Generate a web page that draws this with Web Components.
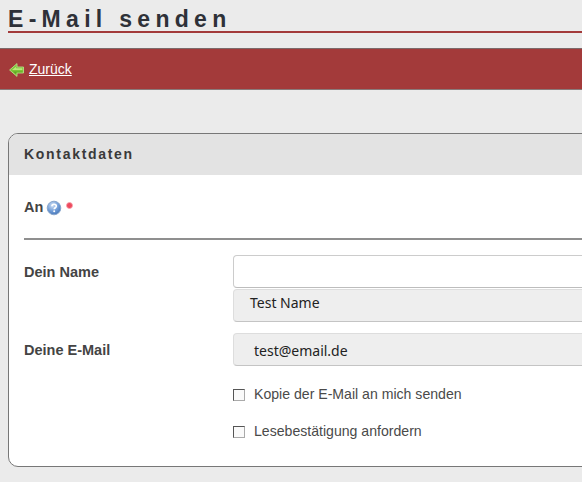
<!DOCTYPE html>
<html lang="de"><head><meta charset="utf-8"><title>E-Mail senden</title>
<style>
html,body{margin:0;padding:0;height:482px;overflow:hidden;background:#ebebeb;font-family:"Liberation Sans",Arial,sans-serif;color:#444}
</style></head><body>
<page-title>E-Mail senden</page-title>
<nav-bar><a-back>Zurück</a-back></nav-bar>
<form-card heading="Kontaktdaten">
  <form-row label="An" help required></form-row>
  <form-sep></form-sep>
  <form-row label="Dein Name" class="name">
    <text-box></text-box>
    <text-box filled>Test Name</text-box>
  </form-row>
  <form-row label="Deine E-Mail" class="mail">
    <text-box filled indent>test@email.de</text-box>
    <check-line>Kopie der E-Mail an mich senden</check-line>
    <check-line class="last">Lesebestätigung anfordern</check-line>
  </form-row>
</form-card>
<script>
function def(name, html, setup){
  customElements.define(name, class extends HTMLElement{
    constructor(){super();this.attachShadow({mode:'open'}).innerHTML=html;}
    connectedCallback(){setup&&setup(this)}
  });
}
def('page-title',`<style>:host{display:block;margin:8px 0 0 8px}
h1{margin:0;font:bold 23px/23px "Liberation Sans",Arial,sans-serif;letter-spacing:5.3px;color:#2e3138;border-bottom:2px solid #a33a3a;height:23px;padding-bottom:0;white-space:nowrap}</style><h1><slot></slot></h1>`);
def('nav-bar',`<style>:host{display:flex;align-items:center;height:40px;margin-top:15px;background:#a33a3a;border-top:1px solid #7d6a6a;border-bottom:1px solid #8a7a7a;padding-left:9px}</style><slot></slot>`);
def('a-back',`<style>:host{display:flex;align-items:center;gap:5px;font-size:14px;color:#fff}
span{text-decoration:underline}svg{display:block;margin-top:1px}</style>
<svg width="15" height="14" viewBox="0 0 15 14"><path d="M.6 7 8 .6V4H14.5V10H8V13.4Z" fill="#7cc436" stroke="#b6dd86" stroke-width=".9" stroke-linejoin="round"/><path d="M3 7 7.2 3.4V5.2H13.4V7H5Z" fill="#b9e879"/><path d="M4 8.4H13.4V9.2H7.2V11.2Z" fill="#5ea522"/></svg><span><slot></slot></span>`);
def('form-card',`<style>:host{display:block;width:800px;margin:43px 0 0 8px;box-sizing:border-box;border:1px solid #777;border-radius:10px;background:#fff;overflow:hidden;height:334px}
header{height:41px;box-sizing:border-box;background:#e3e3e3;padding-left:15px;font:bold 14px/40px "Liberation Sans",Arial,sans-serif;letter-spacing:1.7px;color:#3a3a3a}
main{padding:0 0 0 15px}</style><header></header><main><slot></slot></main>`,
 el=>{el.shadowRoot.querySelector('header').textContent=el.getAttribute('heading')});
def('form-row',`<style>:host{display:grid;grid-template-columns:209px 1fr}
:host(.name){margin-top:15px}:host(.mail){margin-top:10px}
.l{font:bold 14.5px/17px "Liberation Sans",Arial,sans-serif;color:#444;display:flex;align-items:center;gap:3px;height:17px;padding-top:9px}
:host([help]){padding-top:15px;height:48px}
:host([help]) .l{padding-top:9px}
.h,.r{display:none}
:host([help]) .h{display:block;margin-top:1px}:host([required]) .r{display:block;margin:-5px 0 0 1px}
.c{display:flex;flex-direction:column}</style>
<div class="l"><span class="t"></span>
<svg class="h" width="16" height="16" viewBox="0 0 16 16"><defs><radialGradient id="g" cx=".4" cy=".3" r=".8"><stop offset="0" stop-color="#cfe0f5"/><stop offset=".55" stop-color="#6f9bd6"/><stop offset="1" stop-color="#3c6db0"/></radialGradient></defs><circle cx="8" cy="8" r="6.8" fill="url(#g)" stroke="#8aa7cc"/><path d="M5.9 6.3C6 4.9 7 4.3 8.1 4.3 9.4 4.3 10.3 5.1 10.3 6.2 10.3 7.7 8.2 7.8 8.2 9.3" fill="none" stroke="#fff" stroke-width="1.6"/><circle cx="8.2" cy="11.3" r="1" fill="#fff"/></svg>
<svg class="r" width="7" height="7" viewBox="0 0 7 7"><circle cx="3.5" cy="3.5" r="3" fill="#ee4a5e" stroke="#f6a5ae" stroke-width=".8"/></svg></div>
<div class="c"><slot></slot></div>`,
 el=>{el.shadowRoot.querySelector('.t').textContent=el.getAttribute('label')});
def('form-sep',`<style>:host{display:block;height:2px;background:#8f8f8f}</style>`);
def('text-box',`<style>:host{display:flex;align-items:center;box-sizing:border-box;height:33px;margin-bottom:1px;border:1px solid #ccc;border-bottom-color:#bdbdbd;border-radius:4px;background:#fff;padding-left:16px;padding-bottom:7px;font:14px "Noto Sans","Open Sans",sans-serif;color:#222}
:host([filled]){background:#eee;border-color:#ddd #ddd #c4c4c4}
:host([indent]){padding-left:20px;padding-bottom:0;padding-top:2px}</style><slot></slot>`);
def('check-line',`<style>:host{display:flex;align-items:center;gap:9px;height:17px;margin-top:19px;font:14.1px/17px "Liberation Sans",Arial,sans-serif;color:#4a4a4a}
:host(.last){margin-top:20px}
i{display:block;box-sizing:border-box;width:12px;height:12px;border:1px solid #555;border-right-color:#aaa;border-bottom-color:#aaa;background:#fafafa}</style><i></i><span><slot></slot></span>`);
</script>
</body></html>
